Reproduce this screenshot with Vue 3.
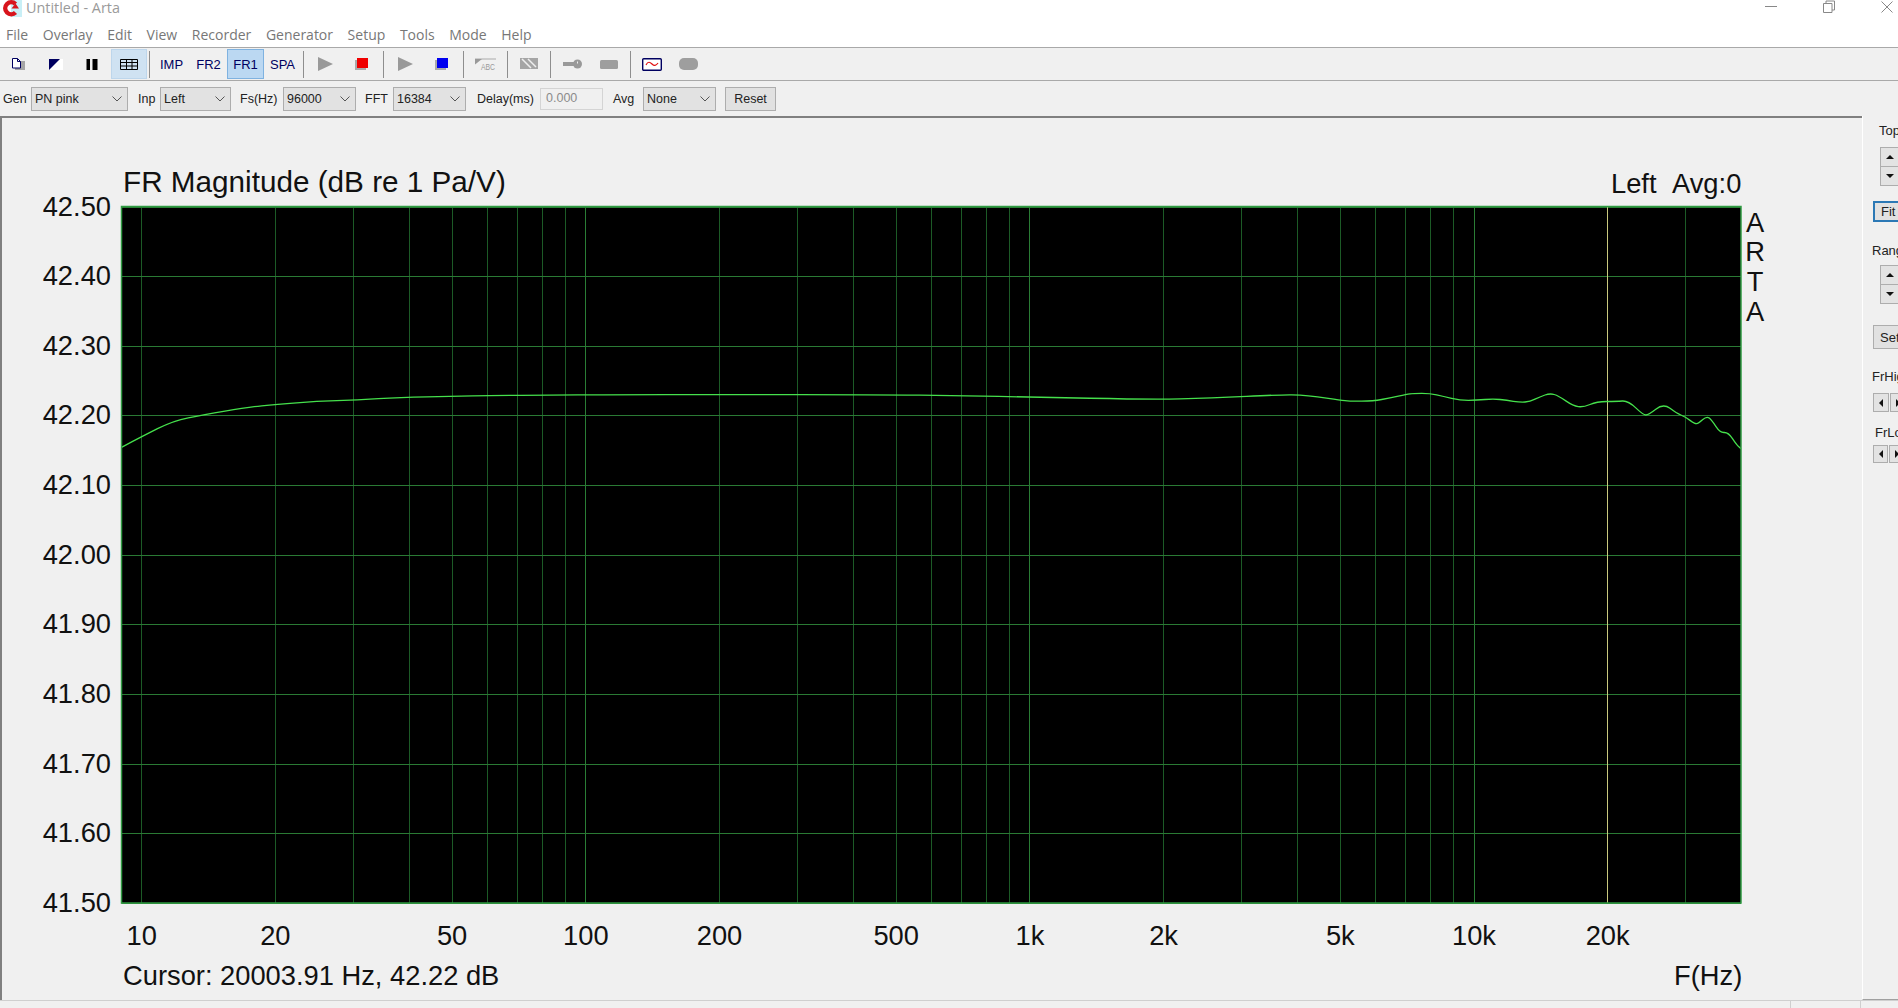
<script setup>
const menus = ['File', 'Overlay', 'Edit', 'View', 'Recorder', 'Generator', 'Setup', 'Tools', 'Mode', 'Help']

// page coordinates of the plot frame
const plot = { left: 121.5, right: 1741, top: 206.5, bottom: 903 }
const decade = 444.1
const xOf = (f) => 141.7 + Math.log10(f / 10) * decade

const yTicks = ['42.50', '42.40', '42.30', '42.20', '42.10', '42.00', '41.90', '41.80', '41.70', '41.60', '41.50'].map((label, i) => ({
  label,
  y: Math.round(plot.top + (i * (plot.bottom - plot.top)) / 10) + 0.5,
}))

const xLines = []
for (const base of [10, 100, 1000, 10000]) {
  for (let n = 1; n < 10; n++) {
    const f = base * n
    if (f > 30000) continue
    xLines.push({ x: Math.floor(xOf(f)) + 0.5, major: n === 1 && base > 10 })
  }
}

const xLabels = [
  ['10', 10], ['20', 20], ['50', 50], ['100', 100], ['200', 200], ['500', 500],
  ['1k', 1000], ['2k', 2000], ['5k', 5000], ['10k', 10000], ['20k', 20000],
].map(([label, f]) => ({ label, x: xOf(f) }))

const cursorX = 1607.5

const points = [
  [121.5, 447.3], [141.7, 436.7], [173.3, 420.7], [203.3, 415], [246.7, 407.3], [276.7, 404.3],
  [316.7, 401.3], [356.7, 400], [400, 397.3], [453.3, 396.3], [491.7, 395.3], [550, 395.3],
  [605, 394.6], [726, 394.6], [871, 394.6], [968, 395.8], [1029, 397], [1150, 399.5], [1210, 398.3],
  [1283, 394.6], [1300, 395], [1316.7, 396.7], [1340, 400], [1350, 401.3], [1373.3, 401], [1390, 398],
  [1406.7, 394.3], [1413.3, 393.3], [1430, 393.3], [1443.3, 396.3], [1460, 400.3], [1476.7, 400.3],
  [1493.3, 398.7], [1506.7, 400.3], [1520, 402.3], [1530, 401.7], [1540, 396.7], [1550, 393.3],
  [1558.3, 395.7], [1573.3, 406], [1583.3, 407.3], [1596.7, 401.7], [1616.7, 401.3], [1628.3, 400.7],
  [1643.3, 415], [1648.3, 415], [1663.3, 403.3], [1676.7, 413.3], [1685, 416.7], [1695, 424],
  [1698.3, 423.3], [1706.7, 416], [1711.7, 420], [1720, 432.7], [1728.3, 432.3], [1736.7, 445], [1741, 448.7],
]

// round the measured points off through their midpoints
let trace = `M${points[0].join(' ')}`
for (let i = 1; i < points.length - 1; i++) {
  const [x, y] = points[i]
  const [nx, ny] = points[i + 1]
  trace += `Q${x} ${y} ${(x + nx) / 2} ${(y + ny) / 2}`
}
trace += `L${points[points.length - 1].join(' ')}`
</script>

<template>
  <div class="window">
    <div class="titlebar">
      <svg class="logo" width="21" height="17" viewBox="0 0 21 17">
        <rect x="10" width="11" height="17" fill="#c9eff6" />
        <path d="M14.500 4A6 6 0 1 0 14.500 12.500" fill="none" stroke="#d8141c" stroke-width="4.500" />
        <path d="M10.500 8.500h7.500l-3.500 -5z" fill="#d8141c" />
      </svg>
      <span class="title">Untitled - Arta</span>
      <div class="win-controls">
        <svg width="12" height="14" viewBox="0 0 12 14"><path d="M0 6.500h12" stroke="#888" /></svg>
        <svg width="12" height="14" viewBox="0 0 12 14"><path d="M.5 3.500h8.500v9h-8.500zM3 3.500V1h8.500v9H9" fill="none" stroke="#888" /></svg>
        <svg width="12" height="14" viewBox="0 0 12 14"><path d="M.5 1.500l11 11M11.500 1.500l-11 11" stroke="#888" /></svg>
      </div>
    </div>

    <div class="menubar">
      <span v-for="m in menus" :key="m" class="menu-item">{{ m }}</span>
    </div>

    <div class="toolbar">
      <div class="tool">
        <svg width="14" height="12" viewBox="0 0 14 12">
          <path d="M9 3h4v9H3v-2h6z" fill="#a5a5a5" />
          <path d="M.5.500h5l3 3v6.500h-8z" fill="#fff" stroke="#000060" />
          <path d="M5.500.500v3h3" fill="none" stroke="#000060" />
        </svg>
      </div>
      <div class="tool">
        <svg width="14" height="11" viewBox="0 0 14 11">
          <rect width="14" height="11" fill="#fff" />
          <path d="M0 0h11L0 11z" fill="#000060" />
        </svg>
      </div>
      <div class="tool">
        <svg width="12" height="11" viewBox="0 0 12 11"><path d="M.5 0h3.500v11H.5zM6.500 0h5v11h-5z" fill="#000" /></svg>
      </div>
      <div class="tool tool-soft">
        <svg width="18" height="11" viewBox="0 0 18 11"><path d="M.5.500h17v10H.500zM.500 3.500h17M.500 7h17M6.500.500v10M12 .500v10" fill="none" stroke="#000" /></svg>
      </div>
      <i class="sep sep-a"></i>
      <div class="tool tool-text">IMP</div>
      <div class="tool tool-text">FR2</div>
      <div class="tool tool-text tool-on">FR1</div>
      <div class="tool tool-text">SPA</div>
      <i class="sep sep-b"></i>
      <div class="tool">
        <svg width="15" height="14" viewBox="0 0 15 14"><path d="M0 0l15 7-15 7z" fill="#999" /></svg>
      </div>
      <div class="tool">
        <svg width="13" height="12" viewBox="0 0 13 12"><rect y="2" width="11" height="10" fill="#aaa" /><rect x="2" width="11" height="10" fill="#f00000" /></svg>
      </div>
      <i class="sep"></i>
      <div class="tool">
        <svg width="15" height="14" viewBox="0 0 15 14"><path d="M0 0l15 7-15 7z" fill="#999" /></svg>
      </div>
      <div class="tool">
        <svg width="13" height="12" viewBox="0 0 13 12"><rect y="2" width="11" height="10" fill="#aaa" /><rect x="2" width="11" height="10" fill="#0000f0" /></svg>
      </div>
      <i class="sep"></i>
      <div class="tool">
        <svg width="21" height="13" viewBox="0 0 21 13">
          <path d="M0 1h21" stroke="#aaa" />
          <path d="M0 1h7L0 6.500z" fill="#999" />
          <text x="6" y="12" class="abc" textLength="14" lengthAdjust="spacingAndGlyphs">ABC</text>
        </svg>
      </div>
      <i class="sep"></i>
      <div class="tool">
        <svg width="18" height="12" viewBox="0 0 18 12">
          <rect width="18" height="11" fill="#a5a5a5" />
          <path d="M2 1l9 9M8 1l8 8" stroke="#eee" stroke-width="1.500" />
        </svg>
      </div>
      <i class="sep"></i>
      <div class="tool">
        <svg width="19" height="10" viewBox="0 0 19 10">
          <rect y="3" width="13" height="4" fill="#999" />
          <circle cx="14.500" cy="5" r="4.500" fill="#999" />
          <path d="M14.500 2.500v2" stroke="#eee" />
        </svg>
      </div>
      <div class="tool"><span class="pill pill-square"></span></div>
      <i class="sep"></i>
      <div class="tool">
        <svg width="20" height="13" viewBox="0 0 20 13">
          <rect x=".7" y=".7" width="18.600" height="11.600" rx="1" fill="#fff" stroke="#000060" stroke-width="1.400" />
          <path d="M4 7c2-4 4-3 6-1s4 2 6-1" fill="none" stroke="#e01010" stroke-width="1.200" />
        </svg>
      </div>
      <div class="tool"><span class="pill"></span></div>
    </div>

    <div class="options">
      <label class="lbl lbl-gen">Gen</label>
      <div class="combo combo-gen">PN pink<svg width="10" height="6" viewBox="0 0 10 6"><path d="M.5.500L5 5 9.500.500" fill="none" stroke="#555" /></svg></div>
      <label class="lbl lbl-inp">Inp</label>
      <div class="combo combo-inp">Left<svg width="10" height="6" viewBox="0 0 10 6"><path d="M.5.500L5 5 9.500.500" fill="none" stroke="#555" /></svg></div>
      <label class="lbl lbl-fs">Fs(Hz)</label>
      <div class="combo">96000<svg width="10" height="6" viewBox="0 0 10 6"><path d="M.5.500L5 5 9.500.500" fill="none" stroke="#555" /></svg></div>
      <label class="lbl lbl-fft">FFT</label>
      <div class="combo">16384<svg width="10" height="6" viewBox="0 0 10 6"><path d="M.5.500L5 5 9.500.500" fill="none" stroke="#555" /></svg></div>
      <label class="lbl lbl-delay">Delay(ms)</label>
      <div class="field">0.000</div>
      <label class="lbl lbl-avg">Avg</label>
      <div class="combo">None<svg width="10" height="6" viewBox="0 0 10 6"><path d="M.5.500L5 5 9.500.500" fill="none" stroke="#555" /></svg></div>
      <button class="reset">Reset</button>
    </div>

    <div class="content">
      <div class="plot-panel">
        <svg class="chart" width="1860" height="882" viewBox="0 118 1860 882">
          <rect :x="plot.left" :y="plot.top" :width="plot.right - plot.left" :height="plot.bottom - plot.top" fill="#000" />
          <line
            v-for="(l, i) in xLines"
            :key="'v' + i"
            :x1="l.x" :x2="l.x" :y1="plot.top" :y2="plot.bottom"
            :stroke="l.major ? '#2a7c35' : '#1c5a26'"
          />
          <line
            v-for="t in yTicks"
            :key="t.label"
            :x1="plot.left" :x2="plot.right" :y1="t.y" :y2="t.y"
            stroke="#2a7a34"
          />
          <line :x1="cursorX" :x2="cursorX" :y1="plot.top" :y2="plot.bottom" stroke="#c9c97e" />
          <path :d="trace" fill="none" stroke="#45e04c" stroke-width="1.300" />
          <rect :x="plot.left" :y="plot.top" :width="plot.right - plot.left" :height="plot.bottom - plot.top" fill="none" stroke="#2f9a42" stroke-width="1.500" />

          <text x="123" y="192" class="t-title">FR Magnitude (dB re 1 Pa/V)</text>
          <text x="1611" y="193" class="t-big">Left</text>
          <text x="1672" y="193" class="t-big">Avg:0</text>
          <text v-for="t in yTicks" :key="'y' + t.label" x="111" :y="t.y + 8.500" text-anchor="end" class="t-big">{{ t.label }}</text>
          <text v-for="l in xLabels" :key="l.label" :x="l.x" y="945" text-anchor="middle" class="t-big">{{ l.label }}</text>
          <text x="123" y="985" class="t-big">Cursor: 20003.91 Hz, 42.22 dB</text>
          <text x="1674" y="985" class="t-big">F(Hz)</text>
          <text x="1755" y="232" text-anchor="middle" class="t-big">A</text>
          <text x="1755" y="261" text-anchor="middle" class="t-big">R</text>
          <text x="1755" y="291" text-anchor="middle" class="t-big">T</text>
          <text x="1755" y="321" text-anchor="middle" class="t-big">A</text>
        </svg>
      </div>

      <aside class="side">
        <div class="side-label side-top">Top</div>
        <div class="spin">
          <div class="spin-btn"><b class="tri-up"></b></div>
          <div class="spin-btn"><b class="tri-down"></b></div>
        </div>
        <button class="side-btn fit">Fit</button>
        <div class="side-label side-range">Range</div>
        <div class="spin spin-range">
          <div class="spin-btn"><b class="tri-up"></b></div>
          <div class="spin-btn"><b class="tri-down"></b></div>
        </div>
        <button class="side-btn set">Set</button>
        <div class="side-label side-frhigh">FrHigh</div>
        <div class="arrows">
          <div class="arrow-btn"><b class="tri-left"></b></div>
          <div class="arrow-btn"><b class="tri-right"></b></div>
        </div>
        <div class="side-label side-frlow">FrLow</div>
        <div class="arrows arrows-low">
          <div class="arrow-btn"><b class="tri-left"></b></div>
          <div class="arrow-btn"><b class="tri-right"></b></div>
        </div>
      </aside>
    </div>

    <div class="statusbar">
      <i class="status-cell"></i>
      <i class="status-cell"></i>
    </div>
  </div>
</template>

<style>
html, body { margin: 0; background: #f0f0f0; }
</style>

<style scoped>
.window {
  width: 1898px;
  height: 1008px;
  overflow: hidden;
  display: flex;
  flex-direction: column;
  background: #f0f0f0;
  font-family: "Liberation Sans", Arial, sans-serif;
  color: #222;
}
.titlebar {
  height: 24px;
  display: flex;
  align-items: flex-start;
  background: #fff;
}
.logo { margin-left: 1px; }
.title {
  margin-left: 4px;
  font-family: "Open Sans", sans-serif;
  font-size: 14.4px;
  line-height: 16px;
  color: #9a9a9a;
}
.win-controls {
  margin-left: auto;
  display: flex;
  gap: 46px;
  padding-right: 5px;
}
.menubar {
  height: 21px;
  padding-bottom: 2px;
  display: flex;
  align-items: center;
  background: #fff;
}
.menu-item {
  padding: 0 7.3px;
  font-family: "Open Sans", sans-serif;
  font-size: 14px;
  color: #777;
}
.menu-item:first-child { padding-left: 6px; }

.toolbar {
  height: 32px;
  flex: none;
  display: flex;
  align-items: center;
  padding-left: 1px;
  border-top: 1px solid #a9a9a9;
  background: #f0f0f0;
}
.tool {
  width: 36.5px;
  height: 30px;
  flex: none;
  box-sizing: border-box;
  display: flex;
  align-items: center;
  justify-content: center;
}
.tool-soft { background: #cfe2f2; border: 1px solid #bdd6ec; }
.tool-text { width: 37px; font-size: 13px; color: #000060; }
.tool-on { background: #bbd8f2; border: 1px solid #7fb2e0; }
.sep {
  width: 1px;
  height: 27px;
  flex: none;
  margin: 0 3px;
  background: #8e8e8e;
}
.sep-a { margin-left: 2px; }
.sep-b { margin-left: 2px; }
.abc { font-size: 9px; fill: #999; }
.pill {
  width: 19px;
  height: 12px;
  border-radius: 5px;
  background: #9e9e9e;
}
.pill-square { width: 18px; height: 9px; border-radius: 1.500px; }

.options {
  height: 36px;
  flex: none;
  box-sizing: border-box;
  display: flex;
  align-items: center;
  border-top: 1px solid #a9a9a9;
  font-size: 12.5px;
}
.lbl { flex: none; }
.lbl-gen { margin-left: 3px; width: 28px; }
.lbl-inp { margin-left: 10px; width: 22px; }
.lbl-fs { margin-left: 9px; width: 43px; }
.lbl-fft { margin-left: 9px; width: 28px; }
.lbl-delay { margin-left: 11px; width: 63px; }
.lbl-avg { margin-left: 10px; width: 30px; }
.combo {
  width: 73px;
  height: 24px;
  flex: none;
  box-sizing: border-box;
  display: flex;
  align-items: center;
  justify-content: space-between;
  padding: 0 5px 0 3px;
  border: 1px solid #adadad;
  background: #e2e2e2;
}
.combo-gen { width: 97px; }
.combo-inp { width: 71px; }
.field {
  width: 63px;
  height: 22px;
  flex: none;
  box-sizing: border-box;
  padding: 0 5px;
  line-height: 19px;
  border: 1px solid #d4d4d4;
  background: #f0f0f0;
  color: #8b8b8b;
}
.reset {
  width: 51px;
  height: 24px;
  flex: none;
  margin-left: 9px;
  padding: 0;
  border: 1px solid #adadad;
  background: #e1e1e1;
  font: inherit;
  color: #222;
}

.content {
  flex: 1;
  min-height: 0;
  display: flex;
}
.plot-panel {
  width: 1862px;
  flex: none;
  box-sizing: border-box;
  border-top: 2px solid #808080;
  border-left: 2px solid #808080;
  overflow: hidden;
}
.chart { display: block; margin-left: -2px; }
.t-title { font-size: 29.7px; fill: #111; }
.t-big { font-size: 27.3px; fill: #111; }

.side {
  flex: 1;
  min-width: 0;
  box-sizing: border-box;
  border-left: 1px solid #fff;
  border-bottom: 1px solid #a0a0a0;
  font-size: 13px;
  overflow: hidden;
}
.side-label { white-space: nowrap; line-height: 16px; }
.side-top { margin: 7px 0 0 16px; }
.side-range { margin: 21px 0 0 9px; }
.side-frhigh { margin: 20px 0 0 9px; }
.side-frlow { margin: 13px 0 0 12px; }
.spin {
  width: 18px;
  margin: 8px 0 0 17px;
  border: 1px solid #adadad;
  background: #adadad;
}
.spin-range { margin-top: 6px; }
.spin-btn {
  height: 18px;
  display: flex;
  align-items: center;
  justify-content: center;
  background: #e3e3e3;
}
.spin-btn + .spin-btn { margin-top: 1px; }
.side-btn {
  display: block;
  width: 40px;
  padding: 0 0 0 6px;
  box-sizing: border-box;
  text-align: left;
  font: inherit;
  color: #222;
  background: #e1e1e1;
  border: 1px solid #adadad;
}
.fit { height: 21px; margin: 15px 0 0 10px; border: 2px solid #2b78b5; }
.set { height: 24px; margin: 21px 0 0 10px; }
.arrows { display: flex; gap: 1px; margin: 8px 0 0 10px; }
.arrows-low { margin-top: 4px; }
.arrow-btn {
  width: 16px;
  height: 19px;
  flex: none;
  box-sizing: border-box;
  display: flex;
  align-items: center;
  justify-content: center;
  border: 1px solid #adadad;
  background: #e3e3e3;
}
.arrows-low .arrow-btn { width: 15px; height: 18px; }
.tri-up, .tri-down, .tri-left, .tri-right { width: 0; height: 0; border-style: solid; border-color: transparent; }
.tri-up { border-width: 0 4px 4px; border-bottom-color: #111; }
.tri-down { border-width: 4px 4px 0; border-top-color: #111; }
.tri-left { border-width: 4px 4px 4px 0; border-right-color: #111; }
.tri-right { border-width: 4px 0 4px 4px; border-left-color: #111; }

.statusbar {
  height: 7px;
  flex: none;
  display: flex;
  justify-content: flex-end;
  gap: 69px;
  padding-right: 37px;
  border-top: 1px solid #cfcfcf;
}
.status-cell { width: 1px; background: #cfcfcf; }
</style>
